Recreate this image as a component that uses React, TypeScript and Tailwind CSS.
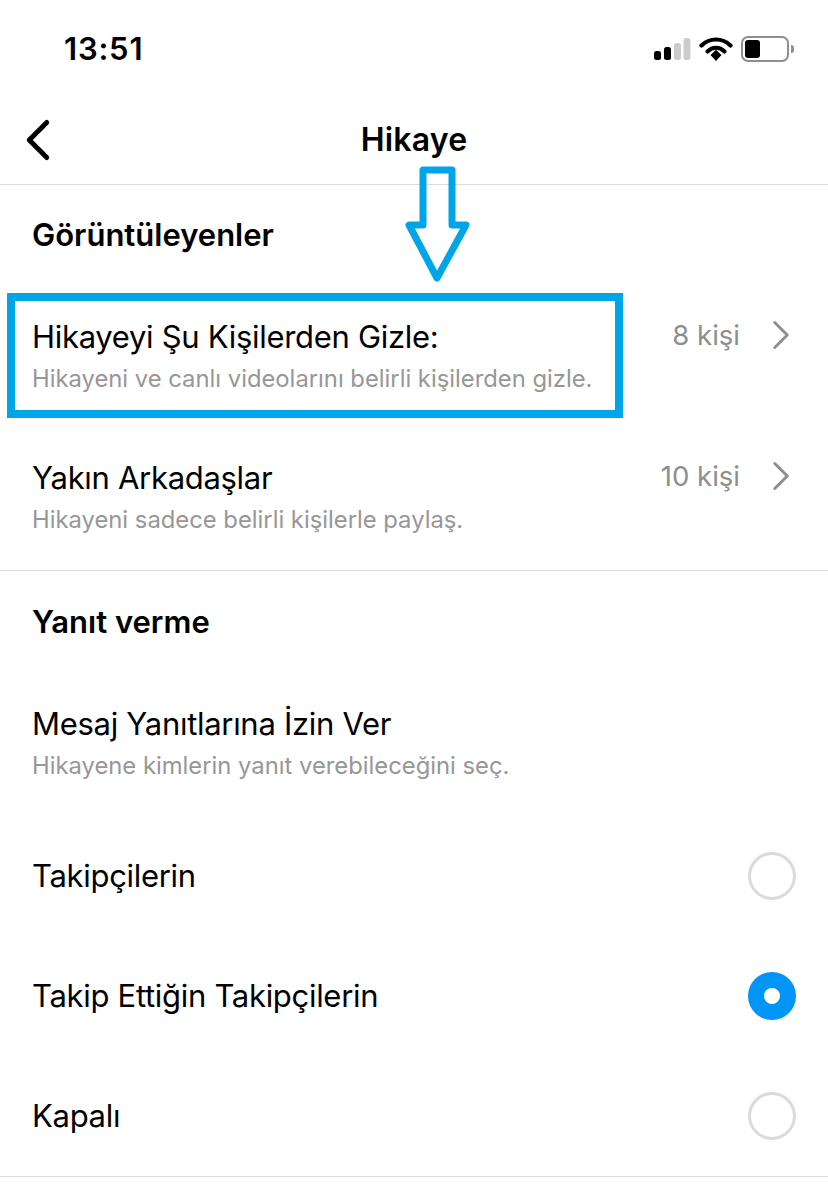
import { ChevronLeft, ChevronRight } from "lucide-react";

const font = "font-['Inter','Liberation_Sans',sans-serif]";

function StatusBar() {
  return (
    <div className="h-[100px] pl-[64px] pr-[34px] flex items-start justify-between">
      <span className="mt-[29px] text-[31px] leading-[40px] font-semibold text-black tracking-[0.8px]">13:51</span>
      <div className="mt-[36px] flex items-center gap-[8px]">
        <svg width="38" height="24" viewBox="0 0 38 24">
          <rect x="1" y="14" width="7" height="9" rx="2.5" fill="#000" />
          <rect x="11" y="10" width="7" height="13" rx="2.5" fill="#000" />
          <rect x="21" y="6" width="7" height="17" rx="2.5" fill="#ccc" />
          <rect x="30.500" y="1" width="7" height="22" rx="2.500" fill="#ccc" />
        </svg>
        <svg width="34" height="26" viewBox="0 0 34 26" fill="none">
          <path d="M2.500 9.500C10.500 1.500 23.500 1.500 31.500 9.500" stroke="#000" strokeWidth="4.200" strokeLinecap="round" />
          <path d="M8.500 15.500C13.500 10.500 20.500 10.500 25.500 15.500" stroke="#000" strokeWidth="4.200" strokeLinecap="round" />
          <path d="M11.500 19L17 13.800L22.500 19L17 25Z" fill="#000" />
        </svg>
        <div className="flex items-center">
          <div className="w-[48px] h-[26px] rounded-[7px] border-[2px] border-[#8e8e8e] p-[2px] flex">
            <div className="w-[15px] rounded-[3px] bg-black" />
          </div>
          <div className="ml-[2px] w-[3px] h-[8px] rounded-r-full bg-[#8e8e8e]" />
        </div>
      </div>
    </div>
  );
}

function NavHeader() {
  return (
    <div className="h-[85px] border-b border-[#dbdbdb] relative flex items-center justify-center pb-[5px]">
      <ChevronLeft className="absolute left-[3px] top-[5px] w-[70px] h-[70px] text-black" strokeWidth={1.7} />
      <h1 className="text-[32px] font-semibold text-black leading-[40px] tracking-[0.2px]">Hikaye</h1>
    </div>
  );
}

function SectionTitle({ children, className }: { children: string; className: string }) {
  return <h2 className={`px-[32px] text-[31px] leading-[40px] font-semibold text-black ${className}`}>{children}</h2>;
}

function LinkRow({ title, desc, count, className }: { title: string; desc: string; count: string; className: string }) {
  return (
    <div className={`pl-[32px] pr-[30px] flex items-start justify-between ${className}`}>
      <div>
        <div className="text-[31px] leading-[40px] text-black tracking-[-0.3px]">{title}</div>
        <div className="mt-[7px] text-[23.800px] leading-[30px] text-[#979797]">{desc}</div>
      </div>
      <div className="flex items-center h-[36px] text-[#8e8e8e]">
        <span className="mt-[2px] text-[27.500px]">{count}</span>
        <ChevronRight className="ml-[16px] w-[50px] h-[50px] -mr-[8px]" strokeWidth={1.4} />
      </div>
    </div>
  );
}

function RadioRow({ label, checked }: { label: string; checked?: boolean }) {
  return (
    <div className="h-[120px] pl-[32px] pr-[32px] flex items-center justify-between">
      <span className="text-[31px] leading-[40px] text-black tracking-[-0.3px]">{label}</span>
      {checked ? (
        <div className="w-[48px] h-[48px] rounded-full bg-[#0095f6] flex items-center justify-center">
          <div className="w-[16px] h-[16px] rounded-full bg-white" />
        </div>
      ) : (
        <div className="w-[48px] h-[48px] rounded-full border-[3px] border-[#dbdbdb]" />
      )}
    </div>
  );
}

export default function App() {
  return (
    <div className={`relative w-[828px] h-[1189px] bg-white overflow-hidden ${font}`}>
      <StatusBar />
      <NavHeader />

      <SectionTitle className="pt-[30px]">Görüntüleyenler</SectionTitle>
      <LinkRow
        className="mt-[62px]"
        title="Hikayeyi Şu Kişilerden Gizle:"
        desc="Hikayeni ve canlı videolarını belirli kişilerden gizle."
        count="8 kişi"
      />
      <LinkRow
        className="mt-[64px]"
        title="Yakın Arkadaşlar"
        desc="Hikayeni sadece belirli kişilerle paylaş."
        count="10 kişi"
      />
      <div className="mt-[35px] border-b border-[#dbdbdb]" />

      <SectionTitle className="pt-[31px]">Yanıt verme</SectionTitle>
      <div className="mt-[62px] pl-[32px] pr-[33px]">
        <div className="text-[31px] leading-[40px] text-black tracking-[-0.3px]">Mesaj Yanıtlarına İzin Ver</div>
        <div className="mt-[7px] text-[23.800px] leading-[30px] text-[#979797]">Hikayene kimlerin yanıt verebileceğini seç.</div>
      </div>

      <div className="mt-[35px]">
        <RadioRow label="Takipçilerin" />
        <RadioRow label="Takip Ettiğin Takipçilerin" checked />
        <RadioRow label="Kapalı" />
      </div>
      <div className="border-b border-[#dbdbdb]" />

      {/* callout drawn over the first row */}
      <div className="absolute left-[7px] top-[293px] w-[616px] h-[125px] border-[8px] border-[#00a5e8]" />
      <svg className="absolute left-[400px] top-[160px]" width="76" height="130" viewBox="0 0 76 130" fill="none">
        <path
          d="M23 10H52V65H66L37 118L9 65H23Z"
          stroke="#00a5e8"
          strokeWidth="7"
          strokeLinejoin="round"
        />
      </svg>
    </div>
  );
}
